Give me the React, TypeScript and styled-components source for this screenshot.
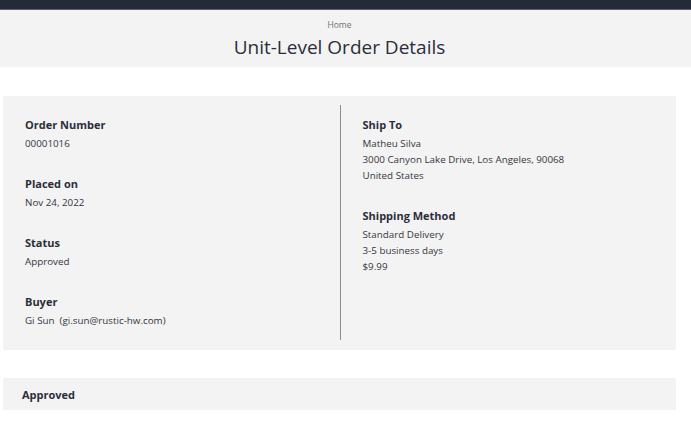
import React from "react";
import styled, { createGlobalStyle } from "styled-components";

const Global = createGlobalStyle`
  html, body { margin: 0; padding: 0; background: #ffffff; }
  body { font-family: "Open Sans", "Noto Sans", sans-serif; color: #2b2e3a; }
  * { box-sizing: border-box; }
`;

const Page = styled.div`
  width: 691px;
  min-height: 429px;
  background: #ffffff;
`;

const TopBar = styled.div`
  height: 10px;
  background: #252a38;
  border-bottom: 1px solid #5d6170;
`;

const Header = styled.header`
  background: #f3f3f3;
  height: 57px;
  padding: 0 12px 0 0;
  display: flex;
  flex-direction: column;
  align-items: center;
`;

const Crumb = styled.div`
  margin-top: 9px;
  font-size: 8.5px;
  line-height: 12px;
  color: #707175;
`;

const Title = styled.h1`
  margin: 4px 0 0;
  font-size: 19px;
  line-height: 24px;
  font-weight: 400;
  color: #2b2e3a;
`;

const Main = styled.main`
  padding: 29px 15px 0 3px;
  display: flex;
  flex-direction: column;
  gap: 28px;
`;

const Card = styled.section`
  background: #f3f3f3;
  padding: 9px 0 10px;
  display: grid;
  grid-template-columns: 1fr 1fr;
`;

const Column = styled.div<{ $divider?: boolean }>`
  padding: 12px 22px 0;
  min-height: 235px;
  border-left: ${(p) => (p.$divider ? "1px solid #8c8d91" : "none")};
`;

const Group = styled.div`
  margin-bottom: 24px;
  &:last-child { margin-bottom: 0; }
`;

const Label = styled.div`
  font-size: 11px;
  line-height: 16px;
  font-weight: 700;
  color: #2b2e3a;
  margin-bottom: 3px;
`;

const Value = styled.div`
  font-size: 9.8px;
  line-height: 16px;
  color: #34363f;
  white-space: pre;
`;

const StatusBar = styled.div`
  background: #f3f3f3;
  height: 32px;
  padding: 0 19px;
  display: flex;
  align-items: center;
  font-size: 11px;
  font-weight: 700;
  color: #2b2e3a;
`;

const Field = ({ label, lines }: { label: string; lines: string[] }) => (
  <Group>
    <Label>{label}</Label>
    {lines.map((l) => (
      <Value key={l}>{l}</Value>
    ))}
  </Group>
);

export default function App() {
  return (
    <>
      <Global />
      <Page>
        <TopBar />
        <Header>
          <Crumb>Home</Crumb>
          <Title>Unit-Level Order Details</Title>
        </Header>
        <Main>
          <Card>
            <Column>
              <Field label="Order Number" lines={["00001016"]} />
              <Field label="Placed on" lines={["Nov 24, 2022"]} />
              <Field label="Status" lines={["Approved"]} />
              <Field label="Buyer" lines={["Gi Sun  (gi.sun@rustic-hw.com)"]} />
            </Column>
            <Column $divider>
              <Field
                label="Ship To"
                lines={["Matheu Silva", "3000 Canyon Lake Drive, Los Angeles, 90068", "United States"]}
              />
              <Field
                label="Shipping Method"
                lines={["Standard Delivery", "3-5 business days", "$9.99"]}
              />
            </Column>
          </Card>
          <StatusBar>Approved</StatusBar>
        </Main>
      </Page>
    </>
  );
}
